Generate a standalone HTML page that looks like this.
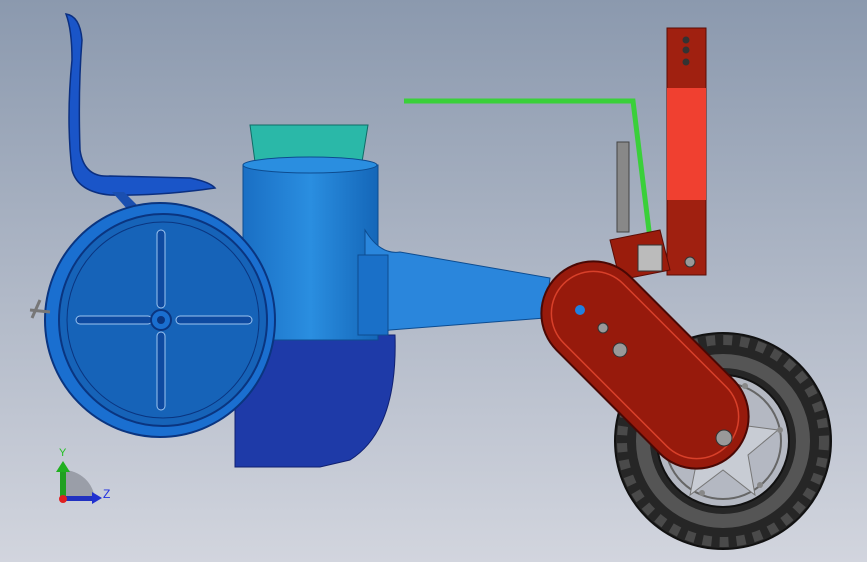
<!DOCTYPE html>
<html><head><meta charset="utf-8"><style>
html,body{margin:0;padding:0;width:867px;height:562px;overflow:hidden}
svg{display:block}
</style></head><body>
<svg width="867" height="562" viewBox="0 0 867 562" xmlns="http://www.w3.org/2000/svg">
<defs>
<linearGradient id="bg" x1="0" y1="0" x2="0" y2="1">
<stop offset="0" stop-color="#8b99ae"/><stop offset="1" stop-color="#d2d5de"/></linearGradient>
<linearGradient id="cyl" x1="0" x2="1"><stop offset="0" stop-color="#1a6fc4"/><stop offset="0.5" stop-color="#2a8ee0"/><stop offset="1" stop-color="#1466b8"/></linearGradient>
</defs>
<rect width="867" height="562" fill="url(#bg)"/>
<path d="M66 14 Q80 16 82 40 Q78 90 80 150 Q84 178 110 176 L190 178 Q210 182 215 188 Q160 196 110 195 Q78 192 72 170 Q66 120 72 60 Q72 30 66 14Z" fill="#1a55c8" stroke="#0b2f80" stroke-width="1.5"/>
<path d="M112 192 L128 210 L140 208 L124 192Z" fill="#1a4fb0"/>
<path d="M235 335 L395 335 Q398 430 350 460 L320 467 L235 467Z" fill="#1e3aa8" stroke="#102070"/>
<path d="M250 125 L368 125 L362 162 L255 162Z" fill="#2ab8a8" stroke="#0f6c66"/>
<path d="M243 165 L378 165 L378 340 L243 340Z" fill="url(#cyl)" stroke="#0d4c90"/>
<ellipse cx="310" cy="165" rx="67" ry="8" fill="#2a8ee0" stroke="#0d4c90"/>
<path d="M365 230 Q380 255 400 252 L550 278 L545 318 L390 330 L365 335Z" fill="#2a86dc" stroke="#0d4c90"/>
<rect x="358" y="255" width="30" height="80" fill="#1a70c8" stroke="#0d4c90"/>
<ellipse cx="160" cy="320" rx="115" ry="117" fill="#1a6fd0" stroke="#0a3580" stroke-width="2"/>
<ellipse cx="163" cy="320" rx="104" ry="106" fill="#1663b8" stroke="#0a3580" stroke-width="2"/>
<ellipse cx="163" cy="320" rx="96" ry="98" fill="none" stroke="#0a3580"/>
<rect x="157" y="230" width="8" height="78" rx="4" fill="#0e4aa0" stroke="#9cc4f0"/>
<rect x="157" y="332" width="8" height="78" rx="4" fill="#0e4aa0" stroke="#9cc4f0"/>
<rect x="76" y="316" width="76" height="8" rx="4" fill="#0e4aa0" stroke="#9cc4f0"/>
<rect x="176" y="316" width="76" height="8" rx="4" fill="#0e4aa0" stroke="#9cc4f0"/>
<circle cx="161" cy="320" r="10" fill="#1a6fd0" stroke="#0a3580" stroke-width="2"/>
<circle cx="161" cy="320" r="4" fill="#0a3580"/>
<path d="M40 300 L32 318 M30 310 L50 312" stroke="#777" stroke-width="3"/>
<path d="M404 101 L633 101 L652 255" fill="none" stroke="#3ad03a" stroke-width="5"/>
<rect x="617" y="142" width="12" height="90" fill="#888" stroke="#444"/>
<rect x="667" y="28" width="39" height="247" fill="#a02010" stroke="#5a0c05"/>
<rect x="667" y="88" width="39" height="112" fill="#f04030"/>
<circle cx="686" cy="40" r="3.5" fill="#333"/><circle cx="686" cy="50" r="3.5" fill="#333"/><circle cx="686" cy="62" r="3.5" fill="#333"/>
<circle cx="690" cy="262" r="5" fill="#999" stroke="#333"/>
<path d="M610 240 L660 230 L670 270 L620 280Z" fill="#9a1c0c" stroke="#5a0c05"/>
<rect x="638" y="245" width="24" height="26" fill="#bbb" stroke="#333"/>
<circle cx="723" cy="441" r="108" fill="#262626" stroke="#111" stroke-width="2"/>
<circle cx="723" cy="441" r="101" fill="none" stroke="#4a4a4a" stroke-width="10" stroke-dasharray="9 8"/>
<circle cx="723" cy="441" r="80" fill="none" stroke="#555" stroke-width="14"/>
<circle cx="723" cy="441" r="66" fill="#b4b8c2" stroke="#111" stroke-width="2"/>
<circle cx="723" cy="441" r="58" fill="none" stroke="#666" stroke-width="2"/>
<path d="M723 385 L740 425 L778 430 L748 455 L755 495 L723 470 L690 495 L698 455 L668 430 L706 425Z" fill="#c8ccd4" stroke="#777"/>
<circle cx="745" cy="386" r="3" fill="#888"/><circle cx="780" cy="430" r="3" fill="#888"/><circle cx="760" cy="485" r="3" fill="#888"/><circle cx="702" cy="493" r="3" fill="#888"/><circle cx="668" cy="445" r="3" fill="#888"/>
<g transform="translate(645 365) rotate(45)">
<rect x="-125" y="-52" width="250" height="104" rx="52" fill="#971a0c" stroke="#4a0804" stroke-width="2"/>
<rect x="-115" y="-42" width="230" height="84" rx="42" fill="none" stroke="#d8402a" stroke-width="1.5"/>
</g>
<circle cx="620" cy="350" r="7" fill="#999" stroke="#333"/>
<circle cx="724" cy="438" r="8" fill="#999" stroke="#333"/>
<circle cx="603" cy="328" r="5" fill="#999" stroke="#333"/>
<circle cx="580" cy="310" r="5" fill="#2080e0"/>
<path d="M63 500 L63 470 A32 32 0 0 1 95 500Z" fill="#9a9ea8"/>
<rect x="60" y="470" width="6" height="30" fill="#20a020"/>
<path d="M56 472 L63 461 L70 472Z" fill="#20b020"/>
<rect x="63" y="496" width="30" height="5" fill="#2030c0"/>
<path d="M92 492 L102 498 L92 504Z" fill="#2030d0"/>
<circle cx="63" cy="499" r="4" fill="#e02020"/>
<text x="59" y="456" font-family="Liberation Sans,sans-serif" font-size="11" fill="#20c020">Y</text>
<text x="103" y="498" font-family="Liberation Sans,sans-serif" font-size="12" fill="#2030e0">Z</text>
</svg>
</body></html>
